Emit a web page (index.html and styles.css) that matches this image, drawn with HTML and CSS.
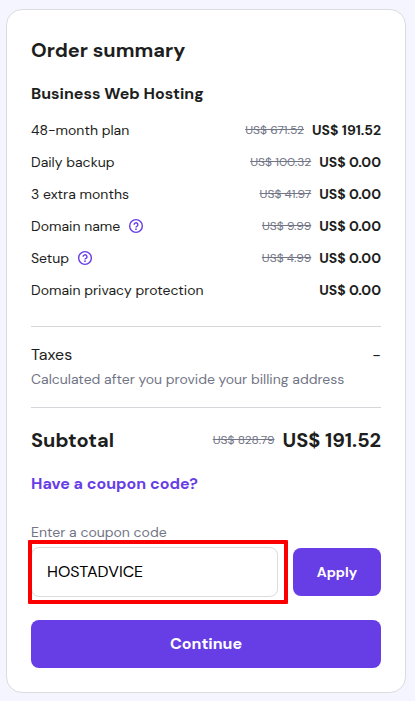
FILE: index.html
```html
<!DOCTYPE html>
<html lang="en">
<head>
<meta charset="utf-8">
<title>Order summary</title>
<link rel="stylesheet" href="styles.css">
</head>
<body>
<main class="card">
  <h1 class="title">Order summary</h1>
  <h2 class="plan">Business Web Hosting</h2>
  <ul class="items">
    <li class="item"><span class="name">48-month plan</span><s class="old">US$ 671.52</s><b class="price">US$ 191.52</b></li>
    <li class="item"><span class="name">Daily backup</span><s class="old">US$ 100.32</s><b class="price">US$ 0.00</b></li>
    <li class="item"><span class="name">3 extra months</span><s class="old">US$ 41.97</s><b class="price">US$ 0.00</b></li>
    <li class="item"><span class="name">Domain name</span><svg class="help" viewBox="0 0 16 16"><circle cx="8" cy="8" r="6.35"/><path d="M6.1 6.8a1.9 1.9 0 1 1 2.8 1.6C8.3 8.7 8 8.9 8 9.5"/><circle class="dot" cx="8" cy="11.2" r=".85"/></svg><s class="old">US$ 9.99</s><b class="price">US$ 0.00</b></li>
    <li class="item"><span class="name">Setup</span><svg class="help" viewBox="0 0 16 16"><circle cx="8" cy="8" r="6.35"/><path d="M6.1 6.8a1.9 1.9 0 1 1 2.8 1.6C8.3 8.7 8 8.9 8 9.5"/><circle class="dot" cx="8" cy="11.2" r=".85"/></svg><s class="old">US$ 4.99</s><b class="price">US$ 0.00</b></li>
    <li class="item"><span class="name">Domain privacy protection</span><b class="price solo">US$ 0.00</b></li>
  </ul>
  <section class="taxes">
    <div class="tax-row"><span>Taxes</span><span>-</span></div>
    <p class="note">Calculated after you provide your billing address</p>
  </section>
  <div class="subtotal"><span class="sub-name">Subtotal</span><s class="old">US$ 828.79</s><b class="total">US$ 191.52</b></div>
  <a class="link">Have a coupon code?</a>
  <div class="label">Enter a coupon code</div>
  <div class="form">
    <div class="field">HOSTADVICE<span class="highlight"></span></div>
    <button class="btn apply">Apply</button>
  </div>
  <button class="btn continue">Continue</button>
</main>
</body>
</html>
```

FILE: styles.css
```css
* { box-sizing: border-box; margin: 0; padding: 0; }
body {
  background: #f4f5ff;
  color: #1d1e20;
  font-family: "DM Sans", Inter, sans-serif;
  font-optical-sizing: none;
  font-size: 14px;
}
.card {
  width: 400px;
  height: 684px;
  margin: 9px 0 0 6px;
  padding: 24px;
  background: #fff;
  border: 1px solid #dadce0;
  border-radius: 16px;
}
.title { font-size: 20px; line-height: 32px; font-weight: 700; }
.plan { font-size: 16px; line-height: 24px; font-weight: 700; margin-top: 16px; }
.items { list-style: none; display: grid; gap: 8px; margin-top: 12px; }
.item { display: flex; align-items: center; height: 24px; }
.help { width: 16px; height: 16px; margin-left: 8px; fill: none; stroke: #673de6; stroke-width: 1.4; }
.dot { fill: #673de6; stroke: none; }
.old { margin-left: auto; font-size: 12px; color: #727586; }
.price { margin-left: 8px; font-weight: 700; }
.solo { margin-left: auto; }
.taxes { margin-top: 24px; padding: 15px 0; border: solid #d5d6da; border-width: 1px 0; height: 82px; }
.tax-row { display: flex; justify-content: space-between; font-size: 16px; line-height: 25px; }
.note { color: #727586; line-height: 24px; }
.subtotal { display: flex; align-items: center; height: 32px; margin-top: 16px; font-size: 20px; font-weight: 700; }
.subtotal .old { font-weight: 400; }
.total { margin-left: 8px; font-weight: 700; }
.link { display: block; margin-top: 16px; color: #673de6; font-size: 16px; line-height: 24px; font-weight: 700; }
.label { color: #727586; line-height: 20px; margin-top: 26px; }
.form { display: flex; align-items: center; gap: 15px; margin-top: 5px; }
.field {
  position: relative;
  width: 247px;
  height: 50px;
  padding: 0 15px;
  border: 1px solid #dadce0;
  border-radius: 8px;
  color: #000;
  font-size: 16px;
  line-height: 48px;
}
.highlight { position: absolute; inset: -8px -11px -8px -4px; border: 4px solid #fa0000; border-radius: 1px; }
.btn { height: 48px; border: 0; border-radius: 8px; background: #673de6; color: #fff; font: 700 14px "DM Sans", Inter, sans-serif; }
.apply { width: 88px; }
.continue { width: 100%; font-size: 16px; margin-top: 23px; padding-bottom: 1px; }
```
